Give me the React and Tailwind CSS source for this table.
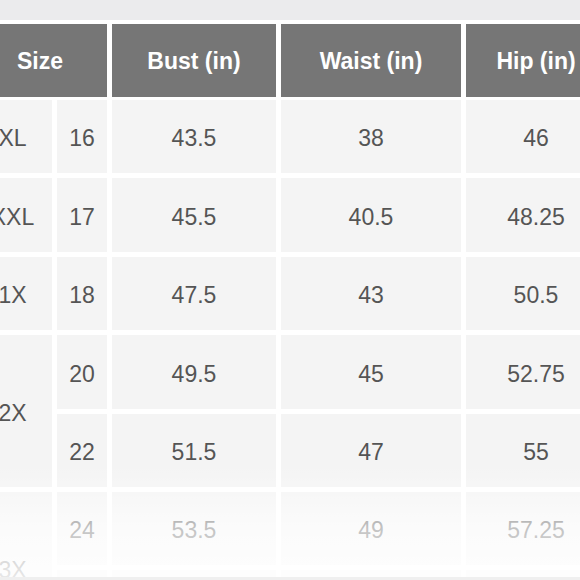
import React from "react";

const rows = [
  { size: "XL", span: 1, items: [["16", "43.5", "38", "46"]] },
  { size: "XXL", span: 1, items: [["17", "45.5", "40.5", "48.25"]] },
  { size: "1X", span: 1, items: [["18", "47.5", "43", "50.5"]] },
  {
    size: "2X",
    span: 2,
    items: [
      ["20", "49.5", "45", "52.75"],
      ["22", "51.5", "47", "55"],
    ],
  },
  {
    size: "3X",
    span: 2,
    items: [
      ["24", "53.5", "49", "57.25"],
      ["26", "55.5", "51", "59.5"],
    ],
  },
];

const cell =
  "bg-[#f4f4f4] flex items-center justify-center pt-[4px] text-[23px] text-[#555555]";
const head =
  "bg-[#767676] flex items-center justify-center pt-[2px] text-white font-bold text-[23px]";

export default function App() {
  const cells = [];
  rows.forEach((g, gi) => {
    g.items.forEach((r, ri) => {
      if (ri === 0) {
        cells.push(
          <div
            key={`s${gi}`}
            className={cell + (g.span === 2 ? " row-span-2" : "")}
          >
            {g.size}
          </div>
        );
      }
      r.forEach((v, vi) => {
        cells.push(
          <div key={`c${gi}-${ri}-${vi}`} className={cell}>
            {v}
          </div>
        );
      });
    });
  });

  return (
    <div
      className="relative w-[580px] h-[580px] overflow-hidden bg-white"
      style={{ fontFamily: '"Liberation Sans", Arial, sans-serif' }}
    >
      <div className="h-[20px] bg-[#ebebed]" />
      <div className="mt-[4px] -ml-[27px] w-[623px]">
        <div className="grid grid-cols-[79px_50px_164px_180px_140px] gap-x-[5px] h-[73px]">
          <div className={head + " col-span-2"}>Size</div>
          <div className={head}>Bust (in)</div>
          <div className={head}>Waist (in)</div>
          <div className={head}>Hip (in)</div>
        </div>
        <div className="mt-[3px] grid grid-cols-[79px_50px_164px_180px_140px] auto-rows-[73.4px] gap-x-[5px] gap-y-[5px]">
          {cells}
        </div>
      </div>
      <div className="absolute left-0 right-0 top-[465px] h-[112px] bg-[linear-gradient(to_bottom,rgba(255,255,255,0)_0%,rgba(255,255,255,0.35)_30%,rgba(255,255,255,0.64)_55%,rgba(255,255,255,0.86)_100%)]" />
      <div className="absolute left-0 right-0 top-[577px] h-[3px] bg-[#efefef]" />
    </div>
  );
}
